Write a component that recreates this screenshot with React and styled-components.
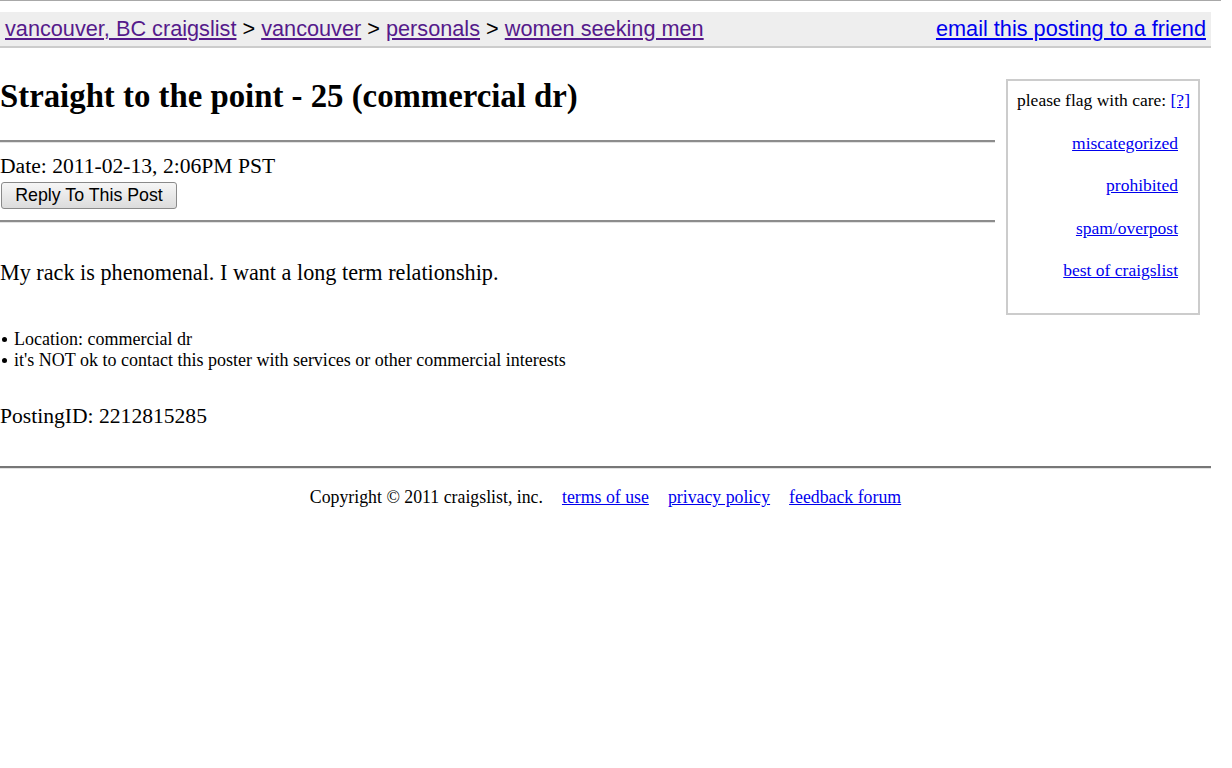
import React from "react";
import styled, { createGlobalStyle } from "styled-components";

const Global = createGlobalStyle`
  html, body { margin: 0; padding: 0; background: #fff; }
  body { font-family: "Liberation Serif", "Times New Roman", serif; font-size: 21.6px; color: #000; }
  a { color: #0000ee; }
`;

const Page = styled.div`
  width: 1211px;
`;

const TopRule = styled.div`
  width: 1221px;
  border-top: 1px solid #a8a8a8;
`;

const Header = styled.div`
  margin-top: 11px;
  display: flex;
  justify-content: space-between;
  align-items: center;
  height: 34px;
  line-height: 34px;
  padding: 0 5px;
  background: #eeeeee;
  border-bottom: 2px solid #cccccc;
  font-family: "Liberation Sans", Arial, sans-serif;
  font-size: 21.7px;
`;

const Crumbs = styled.div`
  white-space: nowrap;
`;

const Crumb = styled.a`
  color: ${(p) => (p.$visited ? "#551a8b" : "#0000ee")};
`;

const Body = styled.div`
  display: flex;
  align-items: flex-start;
`;

const Main = styled.div`
  width: 995px;
`;

const Title = styled.h2`
  margin: 30px 0 0;
  font-size: 32.8px;
  line-height: 36px;
  font-weight: bold;
`;

const Rule = styled.hr`
  margin: ${(p) => p.$mt}px 0 0;
  height: 0;
  border: none;
  border-top: 2px solid #8c8c8c;
  border-bottom: 1px solid #e2e2e2;
`;

const DateLine = styled.div`
  margin-top: 11px;
  line-height: 25px;
`;

const ReplyButton = styled.button`
  display: block;
  margin: 3px 0 0 1px;
  width: 176px;
  height: 27px;
  padding: 0;
  font-family: "Liberation Sans", Arial, sans-serif;
  font-size: 17.8px;
  color: #000;
  border: 1px solid #8a8a8a;
  border-radius: 3px;
  background: linear-gradient(#f6f6f6, #dcdcdc);
`;

const Text = styled.div`
  margin-top: ${(p) => p.$mt}px;
  font-size: ${(p) => p.$size || 21.6}px;
  line-height: 25px;
`;

const Blurbs = styled.ul`
  margin: 44px 0 0;
  padding: 0;
  list-style: none;
  font-size: 18px;
  line-height: 21px;
`;

const Blurb = styled.li`
  display: flex;
  align-items: center;
  &::before {
    content: "";
    width: 5px;
    height: 5px;
    border-radius: 50%;
    background: #000;
    margin: 0 7px 0 2px;
    flex: none;
  }
`;

const Flags = styled.div`
  margin: 31px 0 0 11px;
  width: 194px;
  box-sizing: border-box;
  border: 2px solid #cccccc;
  padding: 9px 9px 32px 9px;
  font-size: 17.5px;
  line-height: 21px;
  display: flex;
  flex-direction: column;
  gap: 21.5px;
`;

const FlagHead = styled.div`
  white-space: nowrap;
`;

const FlagLink = styled.a`
  align-self: flex-end;
  margin-right: 11px;
`;

const FooterRule = styled.hr`
  margin: 37px 0 0;
  height: 0;
  border: none;
  border-top: 2px solid #777;
  border-bottom: 1px solid #e2e2e2;
`;

const Footer = styled.div`
  margin-top: 18px;
  display: flex;
  justify-content: center;
  gap: 19px;
  font-size: 17.8px;
  line-height: 21px;
`;

export default function App() {
  return (
    <>
      <Global />
      <Page>
        <TopRule />
        <Header>
          <Crumbs>
            <Crumb $visited href="#">vancouver, BC craigslist</Crumb> &gt;{" "}
            <Crumb $visited href="#">vancouver</Crumb> &gt;{" "}
            <Crumb $visited href="#">personals</Crumb> &gt;{" "}
            <Crumb $visited href="#">women seeking men</Crumb>
          </Crumbs>
          <Crumb href="#">email this posting to a friend</Crumb>
        </Header>
        <Body>
          <Main>
            <Title>Straight to the point - 25 (commercial dr)</Title>
            <Rule $mt={26} />
            <DateLine>Date: 2011-02-13, 2:06PM PST</DateLine>
            <ReplyButton>Reply To This Post</ReplyButton>
            <Rule $mt={11} />
            <Text $mt={37} $size={22.2}>My rack is phenomenal. I want a long term relationship.</Text>
            <Blurbs>
              <Blurb>Location: commercial dr</Blurb>
              <Blurb>it's NOT ok to contact this poster with services or other commercial interests</Blurb>
            </Blurbs>
            <Text $mt={33}>PostingID: 2212815285</Text>
          </Main>
          <Flags>
            <FlagHead>
              please flag with care: <a href="#">[?]</a>
            </FlagHead>
            <FlagLink href="#">miscategorized</FlagLink>
            <FlagLink href="#">prohibited</FlagLink>
            <FlagLink href="#">spam/overpost</FlagLink>
            <FlagLink href="#">best of craigslist</FlagLink>
          </Flags>
        </Body>
        <FooterRule />
        <Footer>
          <span>Copyright © 2011 craigslist, inc.</span>
          <a href="#">terms of use</a>
          <a href="#">privacy policy</a>
          <a href="#">feedback forum</a>
        </Footer>
      </Page>
    </>
  );
}
